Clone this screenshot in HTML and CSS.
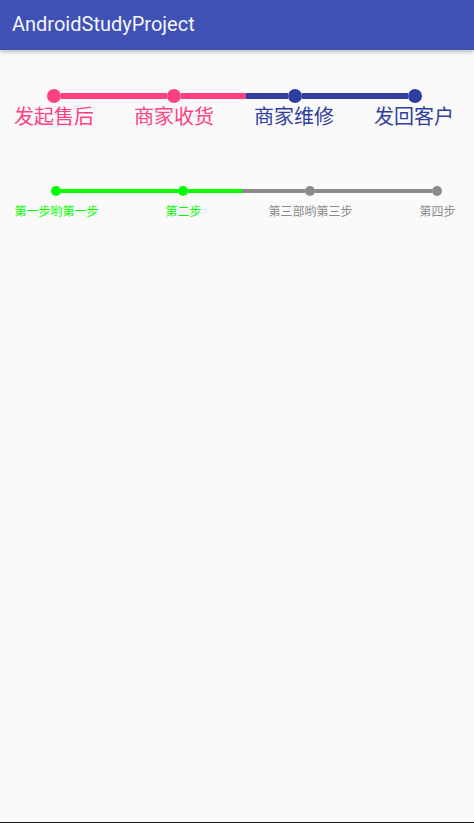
FILE: index.html
```html
<!DOCTYPE html>
<html>
<head>
<meta charset="utf-8">
<link rel="stylesheet" href="styles.css">
</head>
<body>
<div class="app">
  <header class="toolbar"><span class="title">AndroidStudyProject</span></header>
  <main class="content">
    <section class="stepper big">
      <div class="track">
        <span class="node pink"></span>
        <span class="seg pink-bg"></span>
        <span class="node pink"></span>
        <span class="seg mix-big" style="--p:60.8%"></span>
        <span class="node blue"></span>
        <span class="seg blue-bg"></span>
        <span class="node blue"></span>
      </div>
      <div class="labels">
        <span class="pink-t">发起售后</span>
        <span class="pink-t">商家收货</span>
        <span class="blue-t">商家维修</span>
        <span class="blue-t">发回客户</span>
      </div>
    </section>
    <section class="stepper small">
      <div class="track">
        <span class="node green"></span>
        <span class="seg green-bg"></span>
        <span class="node green"></span>
        <span class="seg mix-small" style="--p:46%"></span>
        <span class="node gray"></span>
        <span class="seg gray-bg"></span>
        <span class="node gray"></span>
      </div>
      <div class="labels">
        <span class="green-t">第一步哟第一步</span>
        <span class="green-t">第二步</span>
        <span class="gray-t">第三部哟第三步</span>
        <span class="gray-t">第四步</span>
      </div>
    </section>
  </main>
</div>
</body>
</html>
```
FILE: styles.css
```css
html, body {
  margin: 0;
  padding: 0;
}
body {
  background: #fafafa;
  font-family: "Noto Sans CJK SC", "Noto Sans", sans-serif;
}
.app {
  height: 823px;
  box-sizing: border-box;
  border-bottom: 1px solid #1c1c1c;
  display: flex;
  flex-direction: column;
  overflow: hidden;
}
.toolbar {
  height: 50px;
  background: #3f51b5;
  display: flex;
  align-items: center;
  padding-left: 12px;
  box-shadow: 0 2px 4px rgba(0,0,0,0.25);
  position: relative;
  z-index: 1;
}
.title {
  font-family: Roboto, "Liberation Sans", sans-serif;
  font-size: 20px;
  color: #f4f5fb;
  margin-top: -2px;
}
.content {
  flex: 1;
  display: flex;
  flex-direction: column;
}
.track {
  display: flex;
  align-items: center;
}
.node {
  flex: none;
  border-radius: 50%;
}
.seg {
  flex: 1;
}
.labels {
  display: grid;
  text-align: center;
  white-space: nowrap;
}

/* big stepper */
.big {
  margin-top: 39px;
}
.big .track {
  margin: 0 52px 0 47px;
}
.big .node {
  width: 14px;
  height: 14px;
}
.big .seg {
  height: 6px;
}
.big .labels {
  grid-template-columns: repeat(4, 120px);
  margin-left: -6px;
  margin-top: 2px;
  font-size: 20px;
  line-height: 21px;
}
.pink { background: #ff4081; }
.blue { background: #303f9f; }
.pink-bg { background: #ff4081; }
.blue-bg { background: #303f9f; }
.mix-big { background: linear-gradient(to right, #ff4081 var(--p), #303f9f var(--p)); }
.pink-t { color: #ff4081; }
.blue-t { color: #303f9f; }

/* small stepper */
.small {
  margin-top: 60px;
}
.small .track {
  margin: 0 32px 0 51px;
}
.small .node {
  width: 10px;
  height: 10px;
}
.small .seg {
  height: 4px;
}
.small .labels {
  grid-template-columns: repeat(4, 127px);
  margin-left: -7px;
  margin-top: 8px;
  font-size: 12px;
  line-height: 14px;
}
.green { background: #00ff00; }
.gray { background: #8a8a8a; }
.green-bg { background: #00ff00; }
.gray-bg { background: #8a8a8a; }
.mix-small { background: linear-gradient(to right, #00ff00 var(--p), #8a8a8a var(--p)); }
.green-t { color: #00ff00; }
.gray-t { color: #8a8a8a; }
```
